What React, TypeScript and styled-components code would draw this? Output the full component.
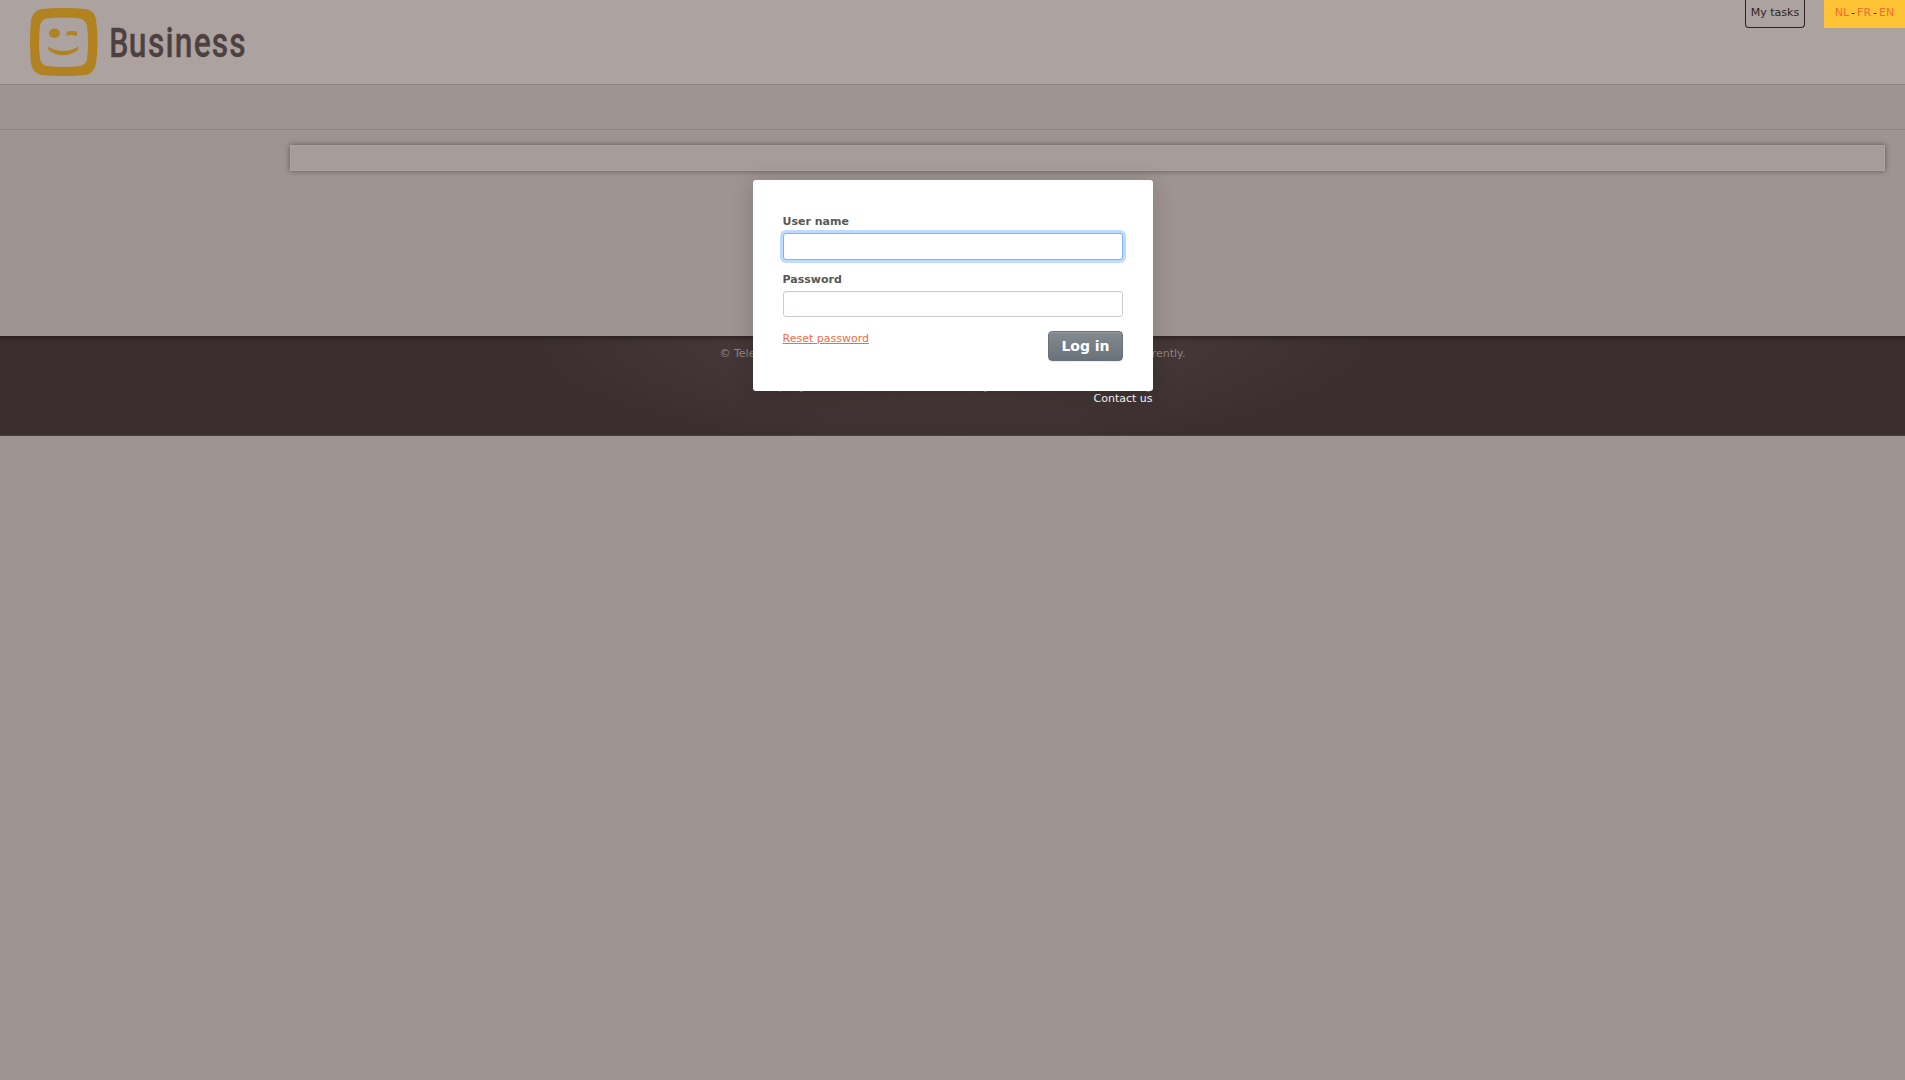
import React from "react";
import styled, { createGlobalStyle } from "styled-components";

const Global = createGlobalStyle`
  * { box-sizing: border-box; }
  html, body { margin: 0; min-height: 100%; }
  body {
    background: #9e9491;
    color: #2f2424;
    font: 11px/18px "DejaVu Sans", Verdana, sans-serif;
    overflow: hidden;
  }
`;

const Page = styled.div`
  min-height: 1080px;
  display: flex;
  flex-direction: column;
`;
const Header = styled.header`
  height: 85px;
  display: flex;
  align-items: flex-start;
  background: #aca3a0;
  border-bottom: 1px solid #8e8482;
  padding-left: 30px;
`;
const Brand = styled.div`
  display: flex;
  flex: 1;
`;
const Tasks = styled.button`
  height: 28px;
  width: 60px;
  margin-right: 19px;
  padding: 0 0 2px;
  background: none;
  color: #2f2424;
  border: 1px solid #2f2424;
  border-top: 0;
  border-radius: 0 0 4px 4px;
  font: inherit;
  white-space: nowrap;
`;
const Languages = styled.nav`
  display: flex;
  justify-content: center;
  gap: 2px;
  width: 81px;
  height: 28px;
  padding-top: 4px;
  background: #ffc435;
`;
const Lang = styled.span`
  color: #f26d32;
`;
const Menu = styled.div`
  height: 45px;
  border-bottom: 1px solid #8e8482;
`;
const Content = styled.main`
  height: 206px;
  padding: 15px 20px 0 290px;
`;
const Panel = styled.section`
  height: 26px;
  background: #a69c9a;
  border: 1px solid #aca3a0;
  box-shadow: 0 0 5px rgba(47, 36, 36, 0.6);
`;
const Footer = styled.footer`
  height: 100px;
  padding-top: 9px;
  color: #8f8482;
  border-bottom: 1px solid #4c4140;
  background: radial-gradient(ellipse 430px 115px at 50% 0, #4c4140, #3a2f2e);
  box-shadow: inset 0 8px 5px -6px rgba(20, 10, 10, 0.5);
`;
const Copyright = styled.div`
  display: flex;
  justify-content: space-between;
  width: 466px;
  height: 18px;
  margin: 0 auto;
  white-space: nowrap;
`;
const Links = styled.div`
  display: flex;
  justify-content: space-between;
  width: 400px;
  height: 12px;
  margin: 17px auto 0;
  padding-left: 1px;
  line-height: 13px;
`;
const MiddleLink = styled.span`
  padding-left: 16px;
`;
const Contact = styled.div`
  width: 400px;
  margin: 0 auto;
  line-height: 13px;
  text-align: right;
  color: #fff;
`;
const Dialog = styled.form`
  position: absolute;
  left: 753px;
  top: 180px;
  width: 400px;
  height: 211px;
  padding: 32px 30px 0;
  background: #fff;
  border-radius: 3px;
  box-shadow: 0 4px 22px rgba(30, 15, 15, 0.2);
`;
const Label = styled.label`
  display: block;
  height: 22px;
  margin-left: -0.5px;
  line-height: 19px;
  font-weight: bold;
  color: #575757;
`;
const Input = styled.input<{ $active?: boolean }>`
  display: block;
  width: 340px;
  height: ${(p) => (p.$active ? 27 : 26)}px;
  margin: ${(p) => (p.$active ? "-1px 0 10px" : "-1px 0 14px")};
  padding: 0 6px;
  background: #fff;
  border: 1px solid ${(p) => (p.$active ? "#7cb5f5" : "#c9cdd2")};
  border-radius: 3px;
  outline: 0;
  box-shadow: ${(p) => (p.$active ? "0 0 0 3px #bedcff" : "inset 0 1px 0 #f6f6f6")};
`;
const Actions = styled.div`
  display: flex;
  justify-content: space-between;
  align-items: flex-start;
`;
const Reset = styled.a`
  margin: -1px 0 0 -0.5px;
  color: #f26d45;
  text-decoration: underline;
`;
const Login = styled.button`
  width: 75px;
  height: 30px;
  padding: 0 0 1px;
  color: #fff;
  font: bold 14px "DejaVu Sans", sans-serif;
  border: 1px solid #697078;
  border-radius: 4px;
  background: linear-gradient(#838b90, #69727b);
  box-shadow: inset 0 1px 0 #929a9e, 0 1px 0 #eceeef;
`;

const LETTER_SCALE = 0.74;
const letterStarts = [109.3, 128.8, 148, 165.5, 174.8, 193.8, 211.8, 229.3];

const Logo = () => (
  <svg width="250" height="84" viewBox="30 0 250 84">
    <path
      fill="#b08220"
      fillRule="evenodd"
      d="M41 9Q64 7 86 9Q95 11 96 20Q99 42 96 64Q94 73 86 75Q64 77 41 75Q32 72 31 63Q29 42 31 20Q33 11 41 9ZM46 18.5Q64 16.5 80 18.5Q86 20 87 26Q89 42 87 59Q86 65 80 66Q64 68 46 66Q41 64 40 59Q38 42 40 26Q41 20 46 18.5Z"
    />
    <ellipse cx="54.5" cy="33.3" rx="5.6" ry="4.7" fill="#b08220" />
    <path d="M67 31.5Q72 30.5 77 31.5V36Q72 34.5 66 35.5ZM48 46.5Q63 55.5 78.5 46.5L78 50Q63 60.5 48.5 50Z" fill="#b08220" />
    <text
      x={letterStarts.map((x) => x / LETTER_SCALE).join(" ")}
      y="56.8"
      transform={`scale(${LETTER_SCALE} 1)`}
      fill="#4c4140"
      stroke="#4c4140"
      strokeWidth="0.3"
      fontFamily="Roboto, sans-serif"
      fontWeight="500"
      fontSize="43"
    >
      <tspan fontSize="41">B</tspan>usiness
    </text>
  </svg>
);

export default function App() {
  return (
    <>
      <Global />
      <Page>
        <Header>
          <Brand><Logo /></Brand>
          <Tasks>My tasks</Tasks>
          <Languages>
            <Lang>NL</Lang>-<Lang>FR</Lang>-<Lang>EN</Lang>
          </Languages>
        </Header>
        <Menu />
        <Content><Panel /></Content>
        <Footer>
          <Copyright>
            <span>© Telenet 2016.</span>
            <span>All prices include VAT unless mentioned differently.</span>
          </Copyright>
          <Links>
            <span>Company</span>
            <MiddleLink>Security</MiddleLink>
            <span>Privacy</span>
          </Links>
          <Contact>Contact us</Contact>
        </Footer>
      </Page>
      <Dialog>
        <Label>User name</Label>
        <Input $active />
        <Label>Password</Label>
        <Input type="password" />
        <Actions>
          <Reset>Reset password</Reset>
          <Login type="button">Log in</Login>
        </Actions>
      </Dialog>
    </>
  );
}
